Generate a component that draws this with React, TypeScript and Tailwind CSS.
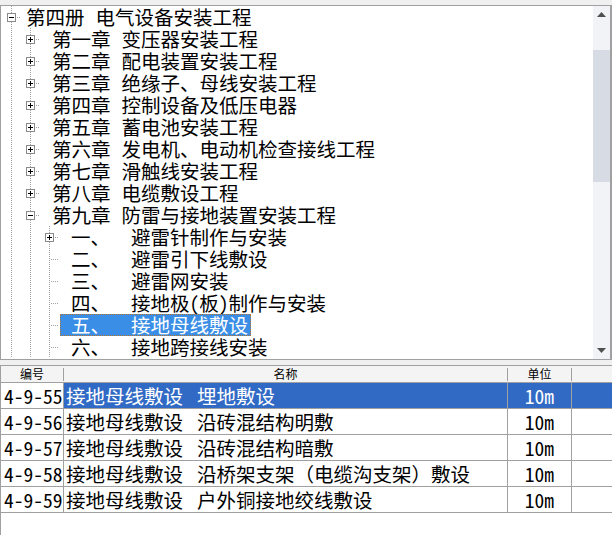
import React from "react";

type Box = "plus" | "minus" | null;

interface Node {
  level: number;
  box: Box;
  head: string;
  text: string;
  selected?: boolean;
}

const nodes: Node[] = [
  { level: 0, box: "minus", head: "第四册", text: "电气设备安装工程" },
  { level: 1, box: "plus", head: "第一章", text: "变压器安装工程" },
  { level: 1, box: "plus", head: "第二章", text: "配电装置安装工程" },
  { level: 1, box: "plus", head: "第三章", text: "绝缘子、母线安装工程" },
  { level: 1, box: "plus", head: "第四章", text: "控制设备及低压电器" },
  { level: 1, box: "plus", head: "第五章", text: "蓄电池安装工程" },
  { level: 1, box: "plus", head: "第六章", text: "发电机、电动机检查接线工程" },
  { level: 1, box: "plus", head: "第七章", text: "滑触线安装工程" },
  { level: 1, box: "plus", head: "第八章", text: "电缆敷设工程" },
  { level: 1, box: "minus", head: "第九章", text: "防雷与接地装置安装工程" },
  { level: 2, box: "plus", head: "一、", text: "避雷针制作与安装" },
  { level: 2, box: null, head: "二、", text: "避雷引下线敷设" },
  { level: 2, box: null, head: "三、", text: "避雷网安装" },
  { level: 2, box: null, head: "四、", text: "接地极(板)制作与安装" },
  { level: 2, box: null, head: "五、", text: "接地母线敷设", selected: true },
  { level: 2, box: null, head: "六、", text: "接地跨接线安装" },
];

const rows = [
  { code: "4-9-55", name: "埋地敷设", selected: true },
  { code: "4-9-56", name: "沿砖混结构明敷" },
  { code: "4-9-57", name: "沿砖混结构暗敷" },
  { code: "4-9-58", name: "沿桥架支架（电缆沟支架）敷设" },
  { code: "4-9-59", name: "户外铜接地绞线敷设" },
];

// tree guide line cell, 19x22
function Guide() {
  const dots = [];
  for (let y = 0; y < 22; y += 2) dots.push(<rect key={y} x={9} y={y} width={1} height={1} />);
  return (
    <svg width="19" height="22" className="shrink-0" fill="#a0a0a0">
      {dots}
    </svg>
  );
}

function Connector({ box }: { box: Box }) {
  const dots = [];
  for (let y = 0; y < 22; y += 2) {
    if (box && y >= 7 && y <= 15) continue;
    dots.push(<rect key={"v" + y} x={9} y={y} width={1} height={1} />);
  }
  for (let x = box ? 15 : 11; x < 19; x += 2) {
    dots.push(<rect key={"h" + x} x={x} y={11} width={1} height={1} />);
  }
  return (
    <svg width="19" height="22" className="shrink-0">
      <g fill="#a0a0a0">{dots}</g>
      {box && (
        <>
          <rect x={5.5} y={7.5} width={8} height={8} fill="#fff" stroke="#8a8a8a" />
          <rect x={7} y={11} width={5} height={1} fill="#000" />
          {box === "plus" && <rect x={9} y={9} width={1} height={5} fill="#000" />}
        </>
      )}
    </svg>
  );
}

function TreeRow({ node }: { node: Node }) {
  return (
    <div className="flex h-[22px] items-center">
      {node.level >= 1 && <Guide />}
      {node.level >= 2 && <Guide />}
      <Connector box={node.box} />
      {node.level === 0 ? (
        <div className="ml-[5px] flex whitespace-nowrap leading-[22px]">
          <span>{node.head}</span>
          <span className="ml-[11px]">{node.text}</span>
        </div>
      ) : (
        <div
          className={`ml-[1px] flex h-[22px] items-center whitespace-nowrap border border-dotted pl-[10px] pr-[2px] leading-[20px] ${
            node.selected ? "border-[#b8742c] bg-[#3a8ee6] text-white" : "border-transparent"
          }`}
        >
          <span className={node.level === 2 ? "w-[60px]" : ""}>{node.head}</span>
          <span className={node.level === 2 ? "[font-feature-settings:'hwid']" : "ml-[11px]"}>{node.text}</span>
        </div>
      )}
    </div>
  );
}

function Arrow({ up }: { up?: boolean }) {
  return (
    <svg width="9" height="5">
      <path d={up ? "M4.5 0 L9 5 L0 5 Z" : "M0 0 L9 0 L4.5 5 Z"} fill="#505050" />
    </svg>
  );
}

export default function App() {
  return (
    <div className="flex h-[535px] w-[612px] flex-col bg-[#f0f0f0] pt-[5px] font-['Noto_Sans_CJK_SC',sans-serif] text-[19.5px] text-black">
      {/* tree */}
      <div className="flex h-[355px] shrink-0 border border-r-2 border-[#a0a0a0] bg-white">
        <div className="flex-1 overflow-hidden pl-[1px]">
          {nodes.map((n, i) => (
            <TreeRow key={i} node={n} />
          ))}
        </div>
        <div className="flex w-[17px] shrink-0 flex-col bg-[#f2f3f7]">
          <div className="flex h-[17px] items-center justify-center">
            <Arrow up />
          </div>
          <div className="h-[27px]" />
          <div className="h-[132px] bg-[#d6dbe4]" />
          <div className="flex-1" />
          <div className="flex h-[17px] items-center justify-center">
            <Arrow />
          </div>
        </div>
      </div>

      <div className="h-[5px] shrink-0" />

      {/* list */}
      <div className="flex flex-1 flex-col border-l border-t border-[#a0a0a0] bg-white">
        <div className="flex h-[17px] shrink-0 border-b border-[#a0a0a0] bg-[#f4f4f4] text-[12px] leading-[16px]">
          <div className="flex w-[63px] items-center">
            <span className="flex-1 text-center">编号</span>
            <div className="h-[13px] w-px bg-[#a0a0a0]" />
          </div>
          <div className="flex w-[444px] items-center">
            <span className="flex-1 text-center">名称</span>
            <div className="h-[13px] w-px bg-[#a0a0a0]" />
          </div>
          <div className="flex w-[64px] items-center">
            <span className="flex-1 text-center">单位</span>
            <div className="h-[13px] w-px bg-[#a0a0a0]" />
          </div>
          <div className="flex-1" />
        </div>
        {rows.map((r) => (
          <div key={r.code} className="flex h-[26px] shrink-0 border-b border-[#a0a0a0] leading-[25px]">
            <div className="w-[63px] shrink-0 overflow-hidden whitespace-nowrap border-r border-[#a0a0a0] pl-[3px] [font-feature-settings:'hwid']">
              {r.code}
            </div>
            <div
              className={`flex w-[444px] shrink-0 whitespace-nowrap border-r border-[#a0a0a0] pl-[2px] ${
                r.selected ? "bg-[#316ac5] text-white" : ""
              }`}
            >
              <span>接地母线敷设</span>
              <span className="ml-[14px]">{r.name}</span>
            </div>
            <div
              className={`w-[64px] shrink-0 border-r border-[#a0a0a0] text-center [font-feature-settings:'hwid'] ${
                r.selected ? "bg-[#316ac5] text-white" : ""
              }`}
            >
              10m
            </div>
            <div className={`flex-1 ${r.selected ? "bg-[#316ac5]" : ""}`} />
          </div>
        ))}
      </div>
    </div>
  );
}
